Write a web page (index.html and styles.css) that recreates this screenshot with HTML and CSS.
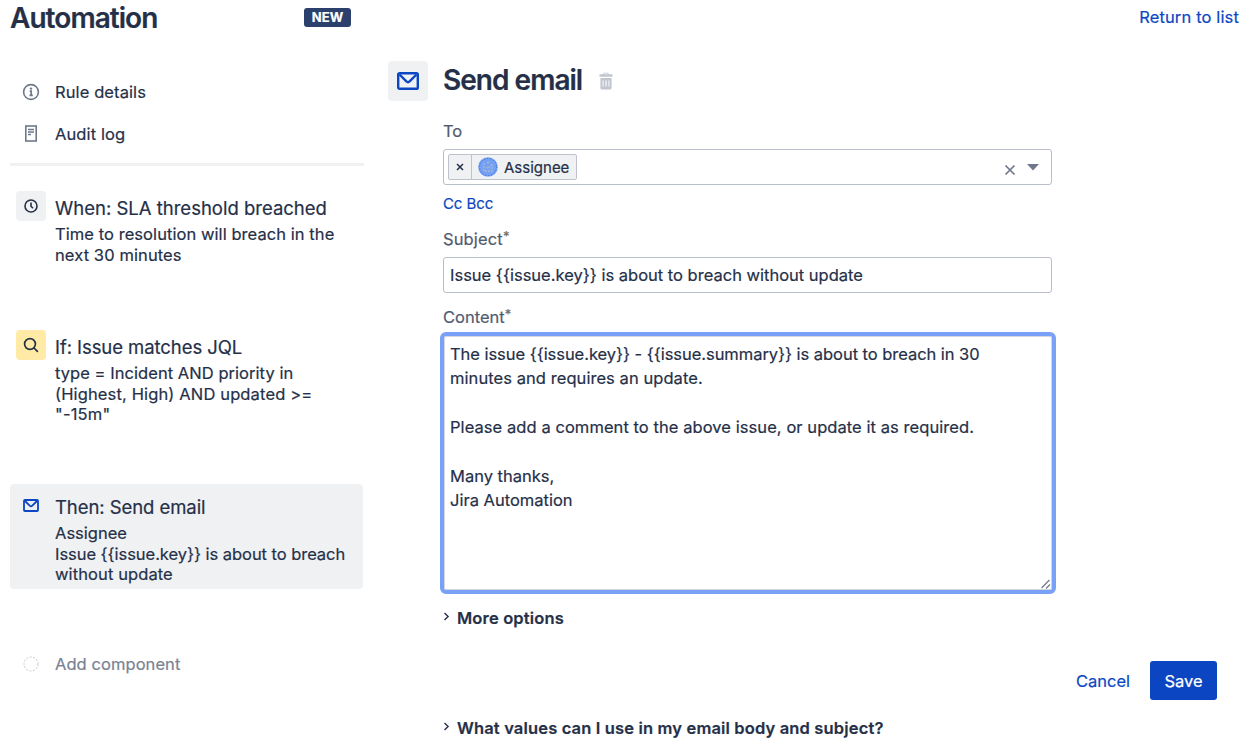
FILE: index.html
```html
<!DOCTYPE html>
<html lang="en">
<head>
<meta charset="utf-8">
<title>Automation</title>
<link rel="stylesheet" href="styles.css">
</head>
<body>
<div class="page">
  <aside class="sidebar">
    <header class="side-head"><h1 class="side-title">Automation</h1><span class="badge">NEW</span></header>
    <nav class="links">
      <a class="link"><span class="link-icon"><svg width="18" height="18" viewBox="0 0 18 18" fill="none" stroke="#6f788b" stroke-width="1.6"><circle cx="9" cy="9" r="7.4"/><path d="M7.7 8.2H9.2V12.3M7.5 12.3H10.8" stroke-width="1.7"/><circle cx="9" cy="5.6" r="1.2" fill="#6f788b" stroke="none"/></svg></span><span class="t-rule">Rule details</span></a>
      <a class="link"><span class="link-icon"><svg width="14" height="18" viewBox="0 0 14 18" fill="none" stroke="#6f788b" stroke-width="1.6"><rect x="1.8" y="1" width="10.4" height="15"/><path d="M4 4.5H10M4 7H10M4 9.5H7" stroke-width="1.3"/></svg></span><span class="t-audit">Audit log</span></a>
    </nav>
    <section class="step step-when">
      <span class="tile"><svg width="14" height="14" viewBox="0 0 14 14" fill="none" stroke="#253048" stroke-width="1.6"><circle cx="7" cy="7" r="6"/><path d="M7 3.4V7.2L9 9.2"/></svg></span>
      <div class="step-text"><h2><span class="t-when">When: SLA threshold breached</span></h2><p><span class="t-w1">Time to resolution will breach in the</span><br><span class="t-w2">next 30 minutes</span></p></div>
    </section>
    <section class="step step-if">
      <span class="tile tile-yellow"><svg width="16" height="16" viewBox="0 0 16 16" fill="none" stroke="#253048" stroke-width="1.7" stroke-linecap="round"><circle cx="7" cy="7" r="5.4"/><path d="M11 11L14.4 14.4"/></svg></span>
      <div class="step-text"><h2><span class="t-if">If: Issue matches JQL</span></h2><p><span class="t-i1">type = Incident AND priority in</span><br><span class="t-i2">(Highest, High) AND updated &gt;=</span><br><span class="t-i3">"-15m"</span></p></div>
    </section>
    <section class="step step-then">
      <span class="tile"><svg width="16" height="13" viewBox="0 0 16 13" fill="none" stroke="#0b47c2" stroke-width="1.8" stroke-linejoin="round"><rect x="1" y="1" width="14" height="11" rx="1"/><path d="M2 2L6.7 6.6Q8 7.8 9.3 6.6L14 2"/></svg></span>
      <div class="step-text"><h2><span class="t-then">Then: Send email</span></h2><p><span class="t-t1">Assignee</span><br><span class="t-t2">Issue {{issue.key}} is about to breach</span><br><span class="t-t3">without update</span></p></div>
    </section>
    <a class="link add"><span class="link-icon"><svg width="16" height="16" viewBox="0 0 16 16" fill="none" stroke="#c3c8d2"><circle cx="8" cy="8" r="7" stroke-dasharray="2 1.5"/></svg></span><span class="t-add">Add component</span></a>
  </aside>
  <main class="main">
    <div class="return"><a class="t-return">Return to list</a></div>
    <header class="main-head">
      <span class="tile-large"><svg width="22" height="18" viewBox="0 0 22 18" fill="none" stroke="#0b47c2" stroke-width="2.4" stroke-linejoin="round"><rect x="1.2" y="1.2" width="19.6" height="15.6" rx="1.4"/><path d="M2.5 2.5L9.4 9.4Q11 10.9 12.6 9.4L19.5 2.5"/></svg></span>
      <h1 class="main-title">Send email</h1>
      <svg class="trash" width="14" height="18" viewBox="0 0 14 18" fill="#c1c6d1"><path d="M.5 2.2H4L5 .7H9L10 2.2H13.5V4.8H.5ZM5.2 2.2H8.8L8.3 1.5H5.7Z"/><path fill-rule="evenodd" d="M1.4 6H12.6V16Q12.6 17.6 11 17.6H3Q1.4 17.6 1.4 16ZM3.6 8.5V14.5H4.5V8.5ZM6.5 8.5V14.5H7.5V8.5ZM9.5 8.5V14.5H10.4V8.5Z"/></svg>
    </header>
    <form class="form">
      <div class="label label-to"><span class="t-to">To</span></div>
      <div class="field select">
        <span class="chip"><span class="chip-x"><svg width="8" height="8" viewBox="0 0 8 8" stroke="#253048" stroke-width="1.5"><path d="M1 1L7 7M7 1L1 7"/></svg></span><span class="chip-body"><svg width="20" height="20" viewBox="0 0 20 20"><circle cx="10" cy="10" r="9.8" fill="#74a1f6"/><circle cx="10" cy="10" r="8.5" fill="none" stroke="#3867bd" stroke-width="1" stroke-dasharray="1 2"/><path d="M6 6V14H14V6M9 5.5H12M8.5 10L10 11.5L13 8" fill="none" stroke="#a8b6ce" stroke-width="1.3" stroke-dasharray="2 1"/></svg><span class="t-chip">Assignee</span></span></span>
        <span class="select-tools"><svg width="12" height="12" viewBox="0 0 12 12" stroke="#6f788b" stroke-width="1.7"><path d="M1.5 1.5L10.5 10.5M10.5 1.5L1.5 10.5"/></svg><svg class="caret" width="12" height="7" viewBox="0 0 12 7" fill="#6f788b"><path d="M0 0H12L6 6.5Z"/></svg></span>
      </div>
      <div class="cc"><a class="t-cc">Cc Bcc</a></div>
      <div class="label label-subject"><span class="t-subject">Subject</span><span class="star">*</span></div>
      <div class="field"><span class="t-input">Issue {{issue.key}} is about to breach without update</span></div>
      <div class="label label-content"><span class="t-content">Content</span><span class="star">*</span></div>
      <div class="editor"><div class="editor-text"><span class="t-e1">The issue {{issue.key}} - {{issue.summary}} is about to breach in 30</span><br><span class="t-e2">minutes and requires an update.</span><br><br><span class="t-e3">Please add a comment to the above issue, or update it as required.</span><br><br><span class="t-e4">Many thanks,</span><br><span class="t-e5">Jira Automation</span></div>
        <svg class="grip" width="10" height="10" viewBox="0 0 10 10" stroke="#6f788b" stroke-width="1.2"><path d="M.5 9L8.5 1M5 9.5L9 5.5"/></svg></div>
      <div class="expand"><svg width="7" height="9" viewBox="0 0 7 9" fill="none" stroke="#253048" stroke-width="1.4"><path d="M1.5 1L5.1 4.5L1.5 8"/></svg><span class="t-more">More options</span></div>
    </form>
    <div class="actions"><a class="t-cancel">Cancel</a><span class="save"><span class="t-save">Save</span></span></div>
    <div class="expand help"><svg width="7" height="9" viewBox="0 0 7 9" fill="none" stroke="#253048" stroke-width="1.4"><path d="M1.5 1L5.1 4.5L1.5 8"/></svg><span class="t-help">What values can I use in my email body and subject?</span></div>
  </main>
</div>
</body>
</html>
```
FILE: styles.css
```css
* { box-sizing: border-box; }
body { margin: 0; background: #fff; color: #253048; font-family: Inter, "Liberation Sans", sans-serif; font-size: 16.5px; overflow: hidden; -webkit-text-stroke: 0.2px currentColor; }
h1, h2, p { margin: 0; }
svg { display: block; flex: none; }
.page { display: flex; width: 1249px; height: 745px; white-space: nowrap; }
.sidebar { width: 378px; padding-left: 10px; flex: none; }
.side-head { display: flex; justify-content: space-between; height: 71px; width: 341px; }
.side-title { font-size: 28px; line-height: 37px; font-weight: 600; letter-spacing: -0.95px; }
.badge { margin-top: 8px; width: 47px; height: 19px; border-radius: 3px; background: #2c406d; color: #fff; font-size: 13px; line-height: 19px; font-weight: 700; text-align: center; }
.links { width: 354px; height: 95px; border-bottom: 3px solid #f0f1f3; }
.link { display: flex; align-items: center; height: 42px; }
.link-icon { width: 41px; margin-right: 4px; display: flex; justify-content: center; }
.step { display: flex; width: 353px; padding: 6px; border-radius: 4px; }
.step-when { margin-top: 19px; height: 139px; }
.step-if { height: 160px; }
.step-then { height: 105px; background: #f0f1f3; }
.tile { width: 30px; height: 30px; margin-right: 9px; border-radius: 4px; background: #f0f1f3; display: flex; align-items: center; justify-content: center; }
.tile-yellow { background: #ffeba5; }
.step-text h2 { margin-top: 6px; margin-bottom: 5px; font-size: 18.5px; line-height: 22px; font-weight: 400; }
.step-text p { line-height: 20.7px; }
.add { margin-top: 54px; color: #7a8292; }
.main { width: 871px; padding-left: 10px; }
.return { display: flex; justify-content: flex-end; height: 61px; padding-right: 10px; line-height: 35px; color: #0b47c2; }
.main-head { display: flex; align-items: center; height: 40px; }
.tile-large { width: 40px; height: 40px; border-radius: 4px; background: #f0f1f3; display: flex; align-items: center; justify-content: center; }
.main-title { margin-left: 15px; margin-bottom: 2px; font-size: 28px; line-height: 38px; font-weight: 600; letter-spacing: -0.97px; }
.trash { margin-left: 17px; }
.form { margin-left: 55px; width: 609px; }
.label { display: flex; color: #515b70; line-height: 20px; }
.label-to { padding-top: 20px; height: 48px; }
.label-subject { padding-top: 16px; height: 44px; }
.label-content { padding-top: 14px; height: 39px; }
.star { font-size: 13px; line-height: 15px; color: #776a55; }
.field { display: flex; align-items: center; height: 36px; border: 1px solid #b9becb; border-radius: 3px; padding: 0 6px; }
.select { padding: 0 12px 0 4px; justify-content: space-between; }
.chip { display: flex; height: 26px; width: 129px; border: 1px solid #bdc2cd; border-radius: 2px; background: #f0f1f3; }
.chip-x { width: 23px; border-right: 1px solid #bdc2cd; display: flex; align-items: center; justify-content: center; }
.chip-body { display: flex; align-items: center; gap: 6px; padding-left: 6px; }
.select-tools { display: flex; gap: 11px; align-items: center; padding-top: 5px; }
.caret { margin-top: -4px; }
.cc { height: 28px; padding-top: 8px; line-height: 20px; color: #0b47c2; }
.editor { position: relative; margin: 0 -4px 0 -3px; height: 262px; border: 4px solid #78a1f7; border-radius: 6px; padding: 6px; box-shadow: inset 0 0 0 1px #d3d6dc; }
.editor-text { line-height: 24.4px; }
.grip { position: absolute; right: 1px; bottom: 1px; }
.expand { display: flex; align-items: center; gap: 7px; height: 20px; margin-top: 14px; font-weight: 600; }
.expand svg { margin-top: -4px; }
.actions { display: flex; justify-content: flex-end; align-items: center; gap: 20px; height: 39px; margin-top: 33px; padding-right: 32px; color: #0b47c2; }
.save { width: 67px; height: 39px; border-radius: 3px; background: #0b45c1; color: #fff; display: flex; align-items: center; justify-content: center; }
.help { margin: 18px 0 0 55px; }
.t-rule, .t-audit, .t-w2, .t-t3 { letter-spacing: 0.1px; }
.t-w1, .t-e2, .t-e3, .t-add { letter-spacing: 0.065px; }
.t-i1 { letter-spacing: 0.05px; }
.t-i2, .t-return, .t-subject { letter-spacing: 0.14px; }
.t-i3 { letter-spacing: 0.2px; }
.t-t2, .t-e1 { letter-spacing: -0.045px; }
.t-if, .t-then { letter-spacing: -0.07px; }
.t-more, .t-help { letter-spacing: 0.155px; }
.t-chip { font-size: 15px; }
.t-cc { font-size: 15px; letter-spacing: -0.1px; }
```
